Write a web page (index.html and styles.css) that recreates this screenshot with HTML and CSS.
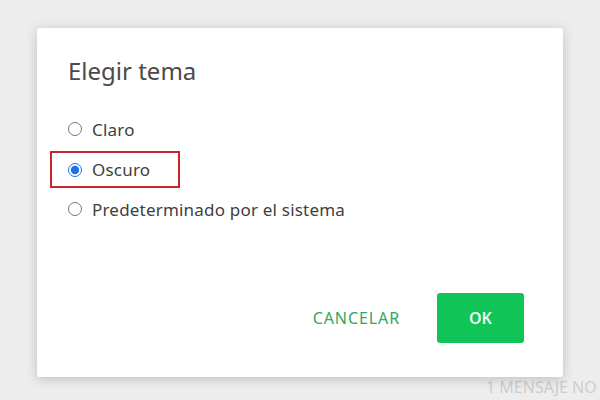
FILE: index.html
```html
<!DOCTYPE html>
<html lang="es">
<head>
    <meta charset="UTF-8">
    <title>Elegir tema</title>
    <link rel="stylesheet" href="styles.css">
</head>
<body>
    <div class="backdrop">
        <span class="unread">1 MENSAJE NO</span>
        <div class="dialog">
            <h2>Elegir tema</h2>
            <form class="options">
                <label class="option"><input type="radio" name="tema"> Claro</label>
                <label class="option selected"><input type="radio" name="tema" checked> Oscuro</label>
                <label class="option"><input type="radio" name="tema"> Predeterminado por el sistema</label>
            </form>
            <div class="actions">
                <button type="button" class="cancel">CANCELAR</button>
                <button type="button" class="ok">OK</button>
            </div>
        </div>
    </div>
</body>
</html>
```

FILE: styles.css
```css
body {
    margin: 0;
    font-family: "Noto Sans", "Open Sans", Arial, sans-serif;
    background-color: #ededed;
}

.backdrop {
    position: relative;
    width: 600px;
    height: 400px;
    padding: 28px 0 0 37px;
    box-sizing: border-box;
    overflow: hidden;
}

.unread {
    position: absolute;
    left: 486px;
    top: 376px;
    font-size: 16px;
    color: #cdcdcd;
    white-space: nowrap;
}

.dialog {
    position: relative;
    width: 526px;
    height: 349px;
    box-sizing: border-box;
    background-color: #ffffff;
    border-radius: 3px;
    box-shadow: 0 2px 12px rgba(0, 0, 0, 0.2);
    padding: 25px 39px 34px 31px;
    display: flex;
    flex-direction: column;
}

h2 {
    margin: 0 0 20px;
    font-size: 24px;
    line-height: 36px;
    font-weight: normal;
    color: #4a4a4a;
}

.options {
    display: flex;
    flex-direction: column;
}

.option {
    display: flex;
    align-items: center;
    gap: 10px;
    font-size: 17px;
    letter-spacing: 0.2px;
    color: #404040;
    height: 40px;
    width: max-content;
}

.option input {
    margin: 0;
    width: 14px;
    height: 14px;
    accent-color: #1a73e8;
}

.selected {
    box-sizing: border-box;
    height: 37px;
    margin: 2px 0 1px -18px;
    padding: 0 28px 0 16px;
    border: 2px solid #c9232b;
}

.actions {
    margin-top: auto;
    display: flex;
    justify-content: flex-end;
    align-items: center;
    gap: 37px;
}

.actions button {
    font-family: "Noto Sans", "Open Sans", Arial, sans-serif;
    font-size: 16px;
    border: none;
    cursor: pointer;
}

.cancel {
    background: none;
    color: #2fa862;
    padding: 0;
    letter-spacing: 0.9px;
}

.ok {
    background-color: #11c457;
    color: #e8fbee;
    font-weight: 600;
    font-size: 17px;
    width: 87px;
    height: 50px;
    border-radius: 3px;
}
```
